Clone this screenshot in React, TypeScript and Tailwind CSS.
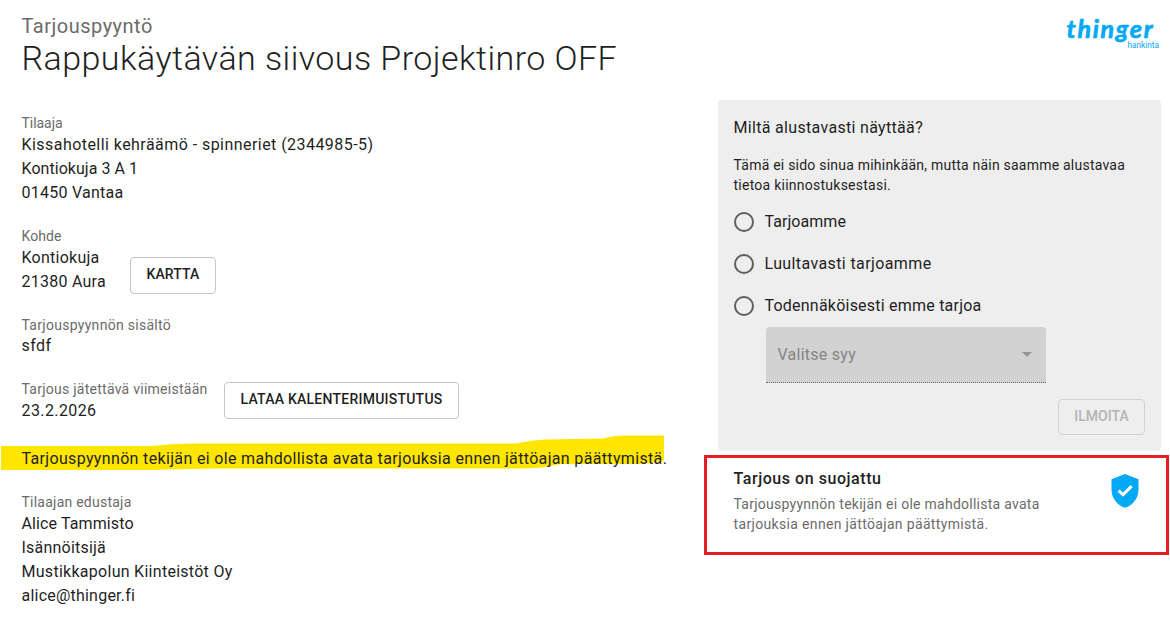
import React from 'react';

interface LineItem {
  text: string;
  tracking: string;
}

interface InfoBlockProps {
  label: string;
  labelTracking: string;
  lines: LineItem[];
}

const InfoBlock: React.FC<InfoBlockProps> = ({ label, labelTracking, lines }) => (
  <div>
    <div className={`text-sm leading-5 text-[#6b6b6b] ${labelTracking}`}>{label}</div>
    {lines.map((line) => (
      <div key={line.text} className={`text-base leading-6 ${line.tracking}`}>
        {line.text}
      </div>
    ))}
  </div>
);

const Logo = () => (
  <svg className="h-10 w-[104px] shrink-0" viewBox="0 0 104 40" fill="#03a9f4">
    <text
      x="9.5"
      y="23.5"
      fontFamily="Lato, sans-serif"
      fontSize="25"
      fontWeight="700"
      fontStyle="italic"
      textLength="86"
      stroke="#03a9f4"
      strokeWidth="0.7"
      strokeLinejoin="round"
    >
      thinger
    </text>
    <text
      x="70.5"
      y="33.5"
      fontFamily="Roboto, sans-serif"
      fontSize="9"
      textLength="31.5"
      lengthAdjust="spacingAndGlyphs"
    >
      hankinta
    </text>
  </svg>
);

const options: LineItem[] = [
  { text: 'Tarjoamme', tracking: 'tracking-[0.056px]' },
  { text: 'Luultavasti tarjoamme', tracking: 'tracking-[0.387px]' },
  { text: 'Todennäköisesti emme tarjoa', tracking: 'tracking-[0.222px]' },
];

const InterestPanel = () => (
  <div className="h-[351px] rounded-[4px] bg-[#eeeeee] pl-4 pr-4 pt-4">
    <div className="-ml-[0.5px] text-base leading-6 tracking-[0.317px]">Miltä alustavasti näyttää?</div>
    <div className="-ml-[0.5px] mt-[15px] text-sm leading-5">
      <div className="tracking-[0.221px]">Tämä ei sido sinua mihinkään, mutta näin saamme alustavaa</div>
      <div className="tracking-[0.249px]">tietoa kiinnostuksestasi.</div>
    </div>
    <div className="mt-[6px]">
      {options.map((option) => (
        <label key={option.text} className="flex h-[42px] items-center gap-[10.5px]">
          <span className="h-5 w-5 rounded-full border-2 border-[#5f5f5f]" />
          <span className={`text-base leading-6 ${option.tracking}`}>{option.text}</span>
        </label>
      ))}
    </div>
    <div className="ml-8 flex h-14 w-[280px] items-center justify-between rounded-t-[4px] border-b border-dotted border-[#6a6a6a] bg-[#d2d2d2] pl-[11.5px] pr-[14px]">
      <span className="text-base leading-6 tracking-[0.259px] text-[#858585]">Valitse syy</span>
      <svg className="h-[5px] w-[10px]" viewBox="0 0 10 5" fill="#949494">
        <path d="M0 0h10L5 5z" />
      </svg>
    </div>
    <div className="mt-4 flex justify-end">
      <button
        disabled
        className="h-9 w-[87px] rounded-[4px] border border-[#d2d2d2] pb-[2px] text-sm font-medium leading-5 tracking-[0.021px] text-[#b4b4b4]"
      >
        ILMOITA
      </button>
    </div>
  </div>
);

const ProtectedNotice = () => (
  <div className="ml-[-14px] mr-[-8px] mt-1 flex h-[100px] justify-between border-[3px] border-[#e81c23] pl-[26.5px] pr-[27px] pt-[9px]">
    <div>
      <div className="text-base font-medium leading-6 tracking-[0.549px]">Tarjous on suojattu</div>
      <div className="mt-[3px] text-sm leading-5 text-[#6b6b6b]">
        <div className="tracking-[0.261px]">Tarjouspyynnön tekijän ei ole mahdollista avata</div>
        <div className="tracking-[0.34px]">tarjouksia ennen jättöajan päättymistä.</div>
      </div>
    </div>
    <svg className="mt-[7px] h-[34px] w-7" viewBox="0 0 28 34">
      <path d="M14 0 27.5 5.2V15.5C27.5 24.2 21.7 31.6 14 33.8 6.3 31.6.5 24.2.5 15.5V5.2z" fill="#03a9f4" />
      <path d="M7.5 16.7 12 20.7 20.6 12.1" fill="none" stroke="#fff" strokeWidth="3" />
    </svg>
  </div>
);

export default function App() {
  return (
    <div className="h-[624px] w-[1170px] overflow-hidden bg-white pl-[21.5px] pr-[9px] pt-[14px] font-[Roboto,sans-serif] text-[#1f1f1f]">
      <header className="flex items-start justify-between">
        <div>
          <div className="text-[20px] leading-6 tracking-[0.5px] text-[#6b6b6b]">Tarjouspyyntö</div>
          <h1 className="text-[34px] font-light leading-10 tracking-[0.44px]">
            Rappukäytävän siivous Projektinro OFF
          </h1>
        </div>
        <Logo />
      </header>

      <main className="flex justify-between">
        {/* Request details */}
        <section className="w-[660px] pt-[35px]">
          <InfoBlock
            label="Tilaaja"
            labelTracking="tracking-[-0.05px]"
            lines={[
              { text: 'Kissahotelli kehräämö - spinneriet (2344985-5)', tracking: 'tracking-[0.447px]' },
              { text: 'Kontiokuja 3 A 1', tracking: 'tracking-[0.05px]' },
              { text: '01450 Vantaa', tracking: 'tracking-[0.255px]' },
            ]}
          />

          <div className="mt-[21px] flex items-end">
            <div className="w-[108.5px]">
              <InfoBlock
                label="Kohde"
                labelTracking="tracking-[0.077px]"
                lines={[
                  { text: 'Kontiokuja', tracking: 'tracking-[0.25px]' },
                  { text: '21380 Aura', tracking: 'tracking-[0.25px]' },
                ]}
              />
            </div>
            <button className="h-[37px] w-[86px] rounded-[4px] border border-[#c4c4c4] pb-[3px] text-sm font-medium leading-5 tracking-[0.12px]">
              KARTTA
            </button>
          </div>

          <div className="mt-[21px]">
            <div className="text-sm leading-5 tracking-[0.286px] text-[#6b6b6b]">Tarjouspyynnön sisältö</div>
            <div className="mt-[-1px] text-base leading-6 tracking-[0.445px]">sfdf</div>
          </div>

          <div className="mt-[21px] flex items-start">
            <div className="w-[202.5px]">
              <InfoBlock
                label="Tarjous jätettävä viimeistään"
                labelTracking="tracking-[0.256px]"
                lines={[{ text: '23.2.2026', tracking: 'tracking-[0.402px]' }]}
              />
            </div>
            <button className="mt-[3px] h-[37px] w-[235px] rounded-[4px] border border-[#c4c4c4] pb-[3px] text-sm font-medium leading-5 tracking-[0.237px]">
              LATAA KALENTERIMUISTUTUS
            </button>
          </div>

          {/* Marker stroke behind the notice */}
          <div className="relative mt-6 h-6">
            <svg className="absolute -left-[20.5px] -top-[12px] h-9 w-[663px]" viewBox="0 0 663 36" fill="#ffe600">
              <path d="M0 11H150Q170 8.5 190 8.5H515Q530 5 545 4.5L602 3.5Q612 .5 625 .5H663V26L640 29H560Q540 33.5 520 33.5H215Q175 34 155 35H0z" />
            </svg>
            <div className="relative whitespace-nowrap text-base leading-6 tracking-[0.342px]">
              Tarjouspyynnön tekijän ei ole mahdollista avata tarjouksia ennen jättöajan päättymistä.
            </div>
          </div>

          <div className="mt-[21px]">
            <InfoBlock
              label="Tilaajan edustaja"
              labelTracking="tracking-[0.236px]"
              lines={[
                { text: 'Alice Tammisto', tracking: 'tracking-[0.12px]' },
                { text: 'Isännöitsijä', tracking: 'tracking-[0.215px]' },
                { text: 'Mustikkapolun Kiinteistöt Oy', tracking: 'tracking-[0.278px]' },
                { text: 'alice@thinger.fi', tracking: 'tracking-[0.219px]' },
              ]}
            />
          </div>
        </section>

        {/* Preliminary answer */}
        <aside className="w-[443px] pt-[22px]">
          <InterestPanel />
          <ProtectedNotice />
        </aside>
      </main>
    </div>
  );
}
